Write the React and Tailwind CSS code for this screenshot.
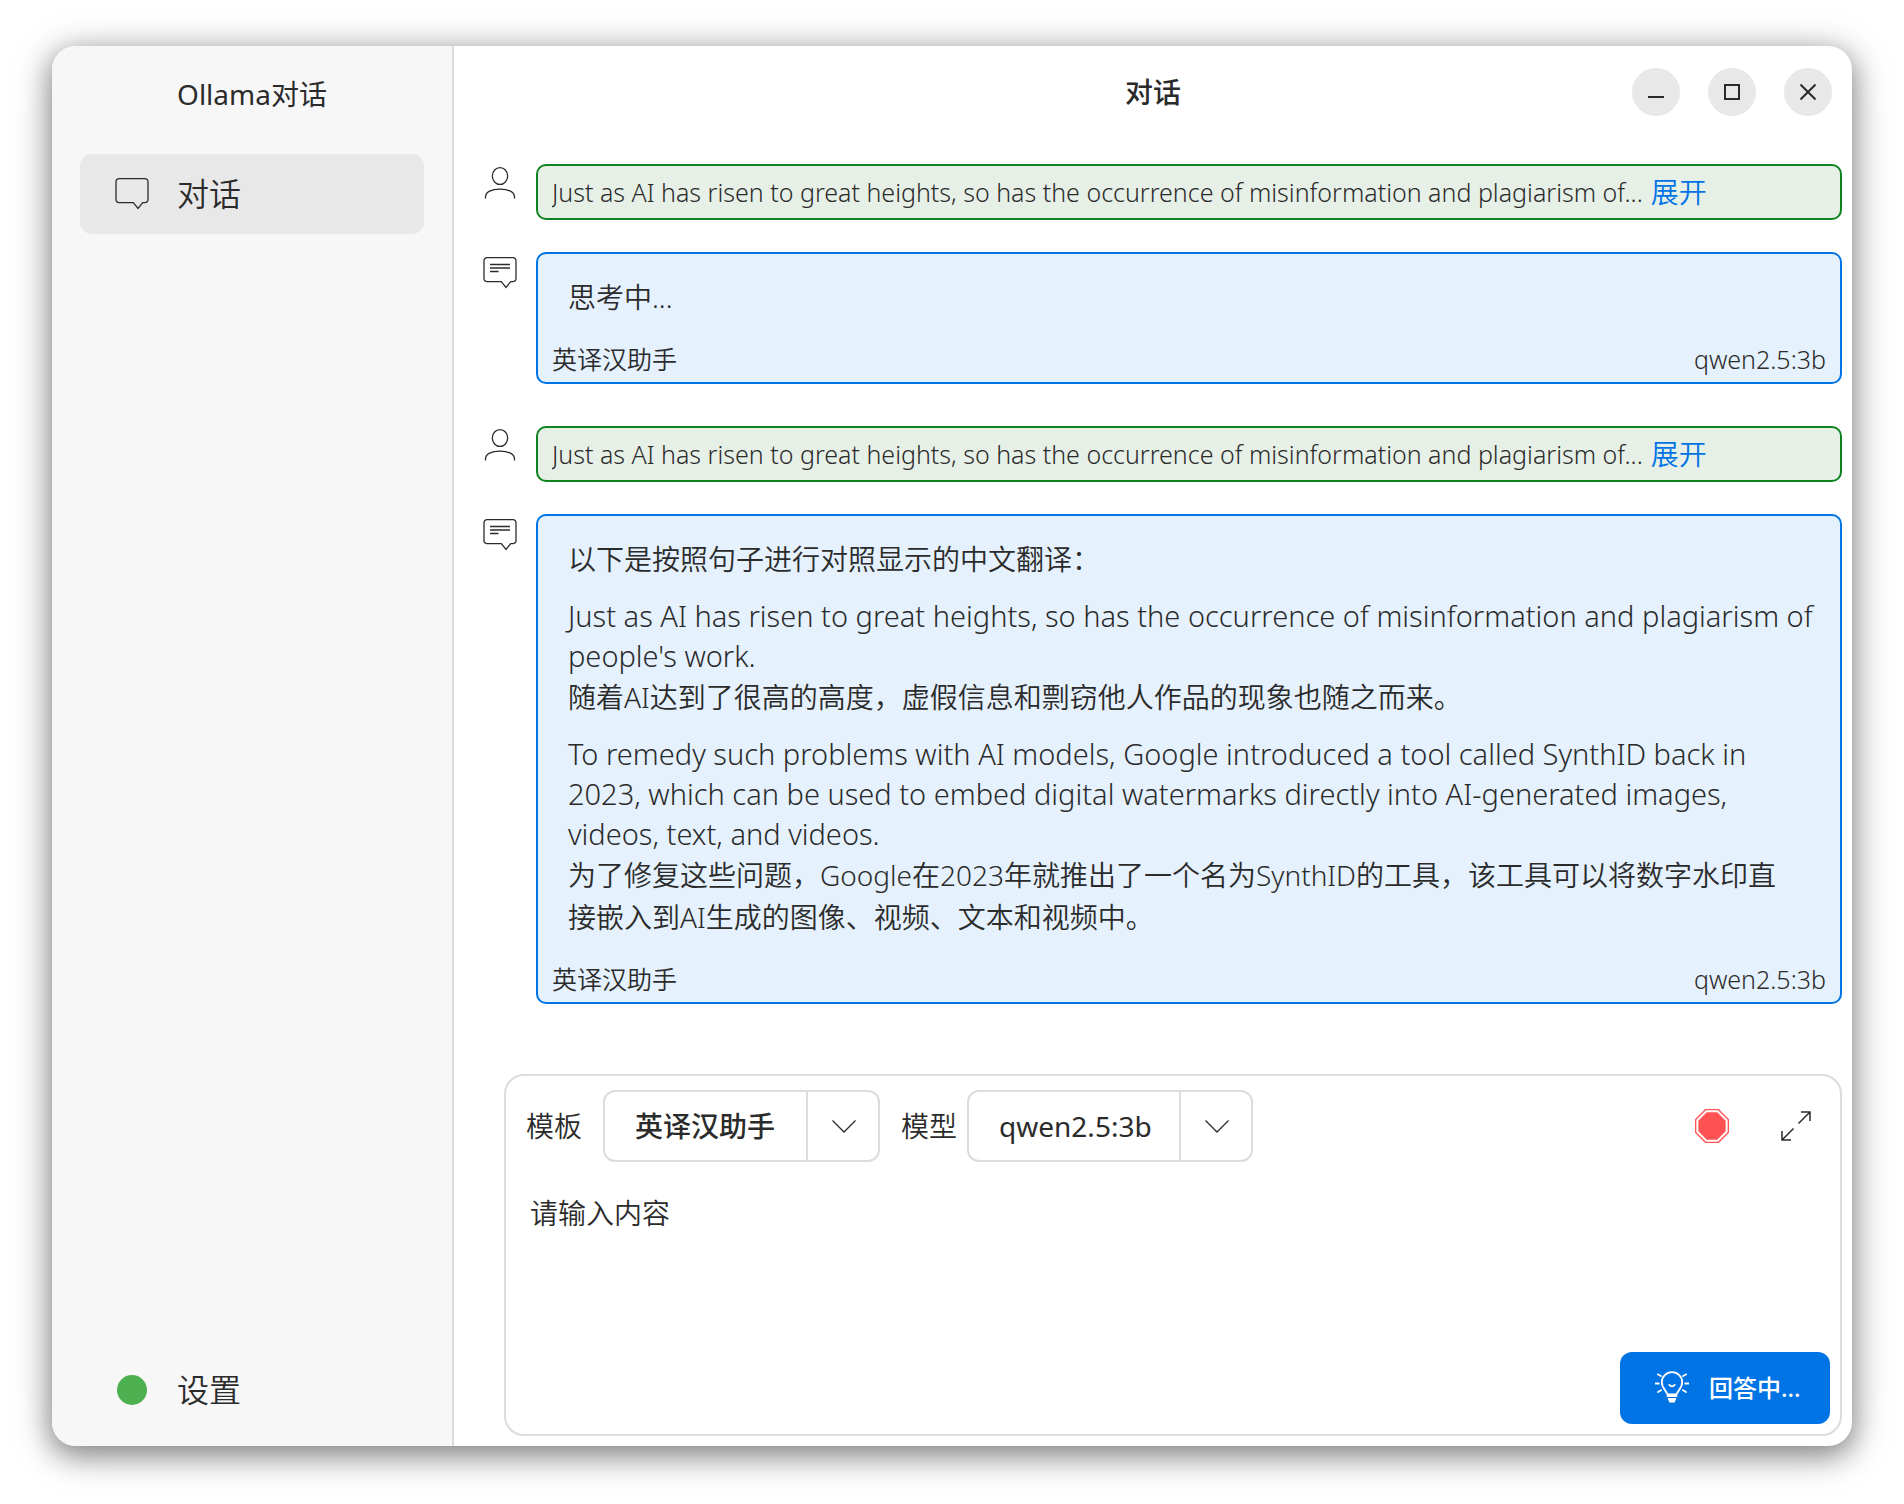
import { useState } from 'react';

const PREVIEW =
    'Just as AI has risen to great heights, so has the occurrence of misinformation and plagiarism of...';

const TRANSLATION = [
    [{ lang: 'zh', text: '以下是按照句子进行对照显示的中文翻译：' }],
    [
        {
            lang: 'en',
            text: "Just as AI has risen to great heights, so has the occurrence of misinformation and plagiarism of people's work.",
        },
        { lang: 'zh', text: '随着AI达到了很高的高度，虚假信息和剽窃他人作品的现象也随之而来。' },
    ],
    [
        {
            lang: 'en',
            text: 'To remedy such problems with AI models, Google introduced a tool called SynthID back in 2023, which can be used to embed digital watermarks directly into AI-generated images, videos, text, and videos.',
        },
        {
            lang: 'zh',
            text: '为了修复这些问题，Google在2023年就推出了一个名为SynthID的工具，该工具可以将数字水印直接嵌入到AI生成的图像、视频、文本和视频中。',
        },
    ],
];

const MESSAGES = [
    { id: 1, role: 'user', text: PREVIEW },
    { id: 2, role: 'assistant', paragraphs: [[{ lang: 'zh', text: '思考中...' }]] },
    { id: 3, role: 'user', text: PREVIEW },
    { id: 4, role: 'assistant', paragraphs: TRANSLATION },
];

function Icon({ size = 34, width = 1, children }) {
    return (
        <svg
            width={size}
            height={size}
            viewBox={`0 0 ${size} ${size}`}
            fill="none"
            stroke="currentColor"
            strokeWidth={width}
            className="shrink-0"
            aria-hidden="true"
        >
            {children}
        </svg>
    );
}

function BubbleIcon({ lines }) {
    return (
        <Icon width={1.3}>
            <path d="M4 1.7h26a3 3 0 0 1 3 3v18a3 3 0 0 1-3 3h-2.3L23 31.5 18.3 25.7H4a3 3 0 0 1-3-3v-18a3 3 0 0 1 3-3z" />
            {lines && <path d="M7 8.5h20M7 12h20M7 15.5h8.5" />}
        </Icon>
    );
}

function UserIcon() {
    return (
        <Icon width={1.3}>
            <ellipse cx="17" cy="10" rx="7.7" ry="8.4" />
            <path d="M2.5 32.5v-1.6c0-5 6-7.8 14.5-7.8s14.5 2.8 14.5 7.8v1.6" />
        </Icon>
    );
}

function BulbIcon() {
    return (
        <Icon width={1.8}>
            <path d="M12.7 25c0-5-5.9-7.2-5.9-13.6a10.2 10.2 0 0 1 20.4 0c0 6.4-5.9 8.6-5.9 13.6z" />
            <path d="M12.7 23.5h8.6M14 13.3c1 2.7 5 2.7 6 0" />
            <path d="M13 28.3h8M14 30.3h6" strokeWidth="2.5" />
            <path d="M0 12.5h4.5M29.5 12.5H34M2.3 3l4.4 2.5M31.7 3l-4.4 2.5M2.3 21.5l4.4-2.7M31.7 21.5l-4.4-2.7" />
        </Icon>
    );
}

function WindowButton({ label, children }) {
    return (
        <button
            type="button"
            aria-label={label}
            className="flex size-12 items-center justify-center rounded-full bg-[#e8e8e8] hover:bg-[#dcdcdc]"
        >
            <Icon size={16} width={2}>
                {children}
            </Icon>
        </button>
    );
}

function UserMessage({ text }) {
    return (
        <div className="flex gap-[19px] pb-8">
            <div className="pt-0.5">
                <UserIcon />
            </div>
            <div className="flex h-14 min-w-0 flex-1 items-center gap-2 rounded-[10px] border-2 border-[#0e8420] bg-[#e6f0e7] px-3.5 text-[25px] font-light">
                <p className="truncate">{text}</p>
                <button type="button" className="shrink-0 text-[28px] leading-10 font-[350] text-[#0073e5]">
                    展开
                </button>
            </div>
        </div>
    );
}

function AssistantMessage({ paragraphs }) {
    return (
        <div className="flex gap-[19px] pb-[42px]">
            <div className="pt-1">
                <BubbleIcon lines />
            </div>
            <div className="min-w-0 flex-1 rounded-[10px] border-2 border-[#0073e5] bg-[#e5f1fd] pt-[22px] pb-2 font-[350]">
                <div className="flex flex-col gap-4 pr-6 pl-[30px]">
                    {paragraphs.map((lines, i) => (
                        <div key={i}>
                            {lines.map((line) => (
                                <p
                                    key={line.text}
                                    className={line.lang === 'en' ? 'text-[29px] leading-10 font-light' : 'pr-4 leading-[42px]'}
                                >
                                    {line.text}
                                </p>
                            ))}
                        </div>
                    ))}
                </div>
                <div className="mt-[26px] flex justify-between px-3.5 text-[25px] leading-[30px]">
                    <span>英译汉助手</span>
                    <span className="font-light">qwen2.5:3b</span>
                </div>
            </div>
        </div>
    );
}

function Picker({ id, value, className }) {
    return (
        <div className="relative">
            <select
                id={id}
                defaultValue={value}
                className={`h-[72px] appearance-none rounded-xl border-2 border-[#dcdcdc] bg-white pl-[30px] ${className}`}
            >
                <option>{value}</option>
            </select>
            <span className="pointer-events-none absolute inset-y-0 right-0 flex w-[74px] items-center justify-center border-l-2 border-[#dcdcdc]">
                <Icon size={24} width={1.3}>
                    <path d="M0.5 6.5L12 18 23.5 6.5" />
                </Icon>
            </span>
        </div>
    );
}

function Composer() {
    const [content, setContent] = useState('');

    return (
        <form
            className="mt-auto ml-[21px] rounded-[20px] border-2 border-[#dcdcdc] pt-3.5 pb-2.5"
            onSubmit={(e) => e.preventDefault()}
        >
            <div className="flex items-center pr-[29px] pl-5">
                <label htmlFor="template" className="mr-[21px] font-[350]">
                    模板
                </label>
                <Picker id="template" value="英译汉助手" className="w-[277px] font-medium" />
                <label htmlFor="model" className="mr-2.5 ml-[21px] font-[350]">
                    模型
                </label>
                <Picker id="model" value="qwen2.5:3b" className="w-[286px]" />
                <button type="button" aria-label="停止" className="mr-[52px] ml-auto text-[#ff5252]">
                    <Icon width={1.3}>
                        <path d="M10.5 0.7h13L33.3 10.5v13L23.5 33.3h-13L0.7 23.5v-13z" />
                        <path d="M12 4h10l8 8v10l-8 8H12l-8-8V12z" fill="currentColor" />
                    </Icon>
                </button>
                <button type="button" aria-label="展开输入框">
                    <Icon size={30} width={1.5}>
                        <path d="M20 1h9v9M29 1L17.5 12.5M10 29H1v-9M1 29l11.5-11.5" />
                    </Icon>
                </button>
            </div>
            <textarea
                aria-label="请输入内容"
                placeholder="请输入内容"
                value={content}
                onChange={(e) => setContent(e.target.value)}
                className="block h-[190px] w-full resize-none px-6 pt-[30px] leading-[42px] font-[350] outline-none placeholder:text-[#2b2b2b]"
            />
            <div className="flex justify-end pr-2.5">
                <button
                    type="submit"
                    className="flex h-[72px] w-[210px] items-center gap-5 rounded-xl bg-[#0073e5] pl-[35px] text-[24px] font-medium text-white"
                >
                    <BulbIcon />
                    回答中...
                </button>
            </div>
        </form>
    );
}

export default function App() {
    return (
        <div className="flex min-h-screen bg-white px-[52px] pt-[46px] pb-[58px] font-['Noto_Sans','Noto_Sans_CJK_SC',sans-serif] text-[28px] leading-10 text-[#2b2b2b]">
            <div className="flex flex-1 overflow-hidden rounded-3xl bg-white shadow-[0_8px_28px_2px_rgba(0,0,0,0.42),0_6px_50px_rgba(0,0,0,0.14)]">
                <aside className="flex w-[402px] shrink-0 flex-col border-r-2 border-[#dcdcdc] bg-[#f7f7f7] px-7 pb-4">
                    <h1 className="flex h-24 items-center justify-center">Ollama对话</h1>
                    <nav className="flex flex-1 flex-col justify-between pt-3 text-[32px] font-[350]">
                        <a href="#chat" className="flex h-20 items-center gap-7 rounded-xl bg-[#e8e8e8] px-[35px]">
                            <BubbleIcon />
                            对话
                        </a>
                        <a href="#settings" className="flex h-20 items-center gap-7 px-[35px]">
                            <span className="mx-0.5 size-[30px] rounded-full bg-[#4caf50]" />
                            设置
                        </a>
                    </nav>
                </aside>
                <main className="flex min-w-0 flex-1 flex-col pb-2.5">
                    <header className="grid grid-cols-[1fr_auto_1fr] items-center px-5 pt-[22px]">
                        <h2 className="col-start-2 font-medium">对话</h2>
                        <div className="flex justify-end gap-7">
                            <WindowButton label="最小化">
                                <path d="M0 13h16" />
                            </WindowButton>
                            <WindowButton label="最大化">
                                <path d="M1 1h14v14H1z" />
                            </WindowButton>
                            <WindowButton label="关闭">
                                <path d="M0.5 0.5l15 15M15.5 0.5l-15 15" />
                            </WindowButton>
                        </div>
                    </header>
                    <div className="flex flex-1 flex-col pt-12 pr-2.5 pl-[29px]">
                        {MESSAGES.map((message) =>
                            message.role === 'user' ? (
                                <UserMessage key={message.id} text={message.text} />
                            ) : (
                                <AssistantMessage key={message.id} paragraphs={message.paragraphs} />
                            )
                        )}
                        <Composer />
                    </div>
                </main>
            </div>
        </div>
    );
}
